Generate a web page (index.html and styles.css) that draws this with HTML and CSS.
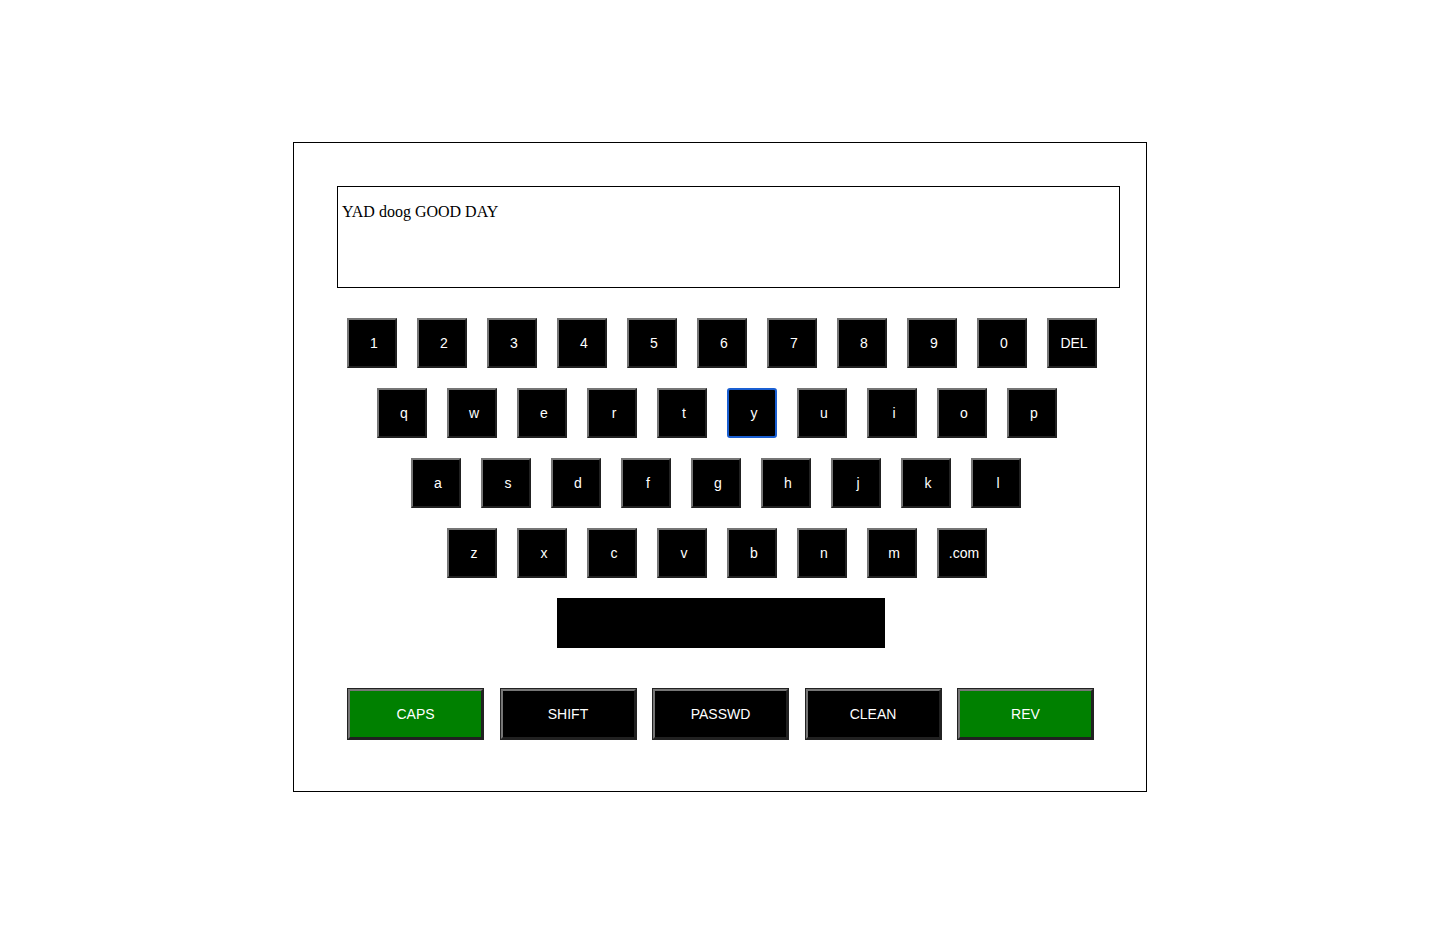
FILE: index.html
```html
<!DOCTYPE html>
<html>
<head>
<meta charset="utf-8">
<link rel="stylesheet" href="styles.css">
</head>
<body>
<div class="panel">
  <div class="display">YAD doog GOOD DAY</div>
  <div class="keyboard">
    <div class="row row-num">
      <button class="key">1</button><button class="key">2</button><button class="key">3</button><button class="key">4</button><button class="key">5</button><button class="key">6</button><button class="key">7</button><button class="key">8</button><button class="key">9</button><button class="key">0</button><button class="key">DEL</button>
    </div>
    <div class="row row-q">
      <button class="key">q</button><button class="key">w</button><button class="key">e</button><button class="key">r</button><button class="key">t</button><button class="key focused">y</button><button class="key">u</button><button class="key">i</button><button class="key">o</button><button class="key">p</button>
    </div>
    <div class="row row-a">
      <button class="key">a</button><button class="key">s</button><button class="key">d</button><button class="key">f</button><button class="key">g</button><button class="key">h</button><button class="key">j</button><button class="key">k</button><button class="key">l</button>
    </div>
    <div class="row row-z">
      <button class="key">z</button><button class="key">x</button><button class="key">c</button><button class="key">v</button><button class="key">b</button><button class="key">n</button><button class="key">m</button><button class="key">.com</button>
    </div>
    <div class="row row-space">
      <button class="space"></button>
    </div>
  </div>
  <div class="controls">
    <button class="ctrl on">CAPS</button>
    <button class="ctrl">SHIFT</button>
    <button class="ctrl">PASSWD</button>
    <button class="ctrl">CLEAN</button>
    <button class="ctrl on">REV</button>
  </div>
</div>
</body>
</html>
```

FILE: styles.css
```css
* { box-sizing: border-box; }
html, body { margin: 0; padding: 0; background: #fff; }
body { font-family: "Liberation Serif", serif; }

.panel {
  width: 854px;
  height: 650px;
  margin: 142px auto 0;
  border: 1px solid #000;
  padding: 43px 26px 0 43px;
}

.display {
  width: 783px;
  height: 102px;
  border: 1px solid #000;
  padding: 16px 4px;
  font-family: "Liberation Serif", serif;
  font-size: 16px;
  line-height: 18px;
  color: #000;
}

.keyboard { margin-top: 30px; }

.row {
  display: flex;
  gap: 20px;
  height: 50px;
  margin-bottom: 20px;
}
.row-num { padding-left: 10px; }
.row-q { padding-left: 40px; }
.row-a { padding-left: 74px; }
.row-z { padding-left: 110px; }
.row-space { padding-left: 220px; margin-bottom: 41px; }

button {
  font-family: "Liberation Sans", Arial, sans-serif;
  font-size: 14px;
  color: #fff;
  padding: 0;
  margin: 0;
}

.key {
  width: 50px;
  height: 50px;
  padding-left: 4px;
  background: #000;
  border: 2px outset #767676;
}
.key.focused {
  border: 2px solid #1a5fd2;
  border-radius: 3px;
}

.space {
  width: 328px;
  height: 50px;
  background: #000;
  border: none;
}

.controls {
  display: flex;
  gap: 17.5px;
  padding-left: 11px;
}
.ctrl {
  width: 135px;
  height: 50px;
  background: #000;
  border: 2px outset #767676;
  box-shadow: 0 0 0 1px #222;
}
.ctrl.on { background: #008000; }
```
